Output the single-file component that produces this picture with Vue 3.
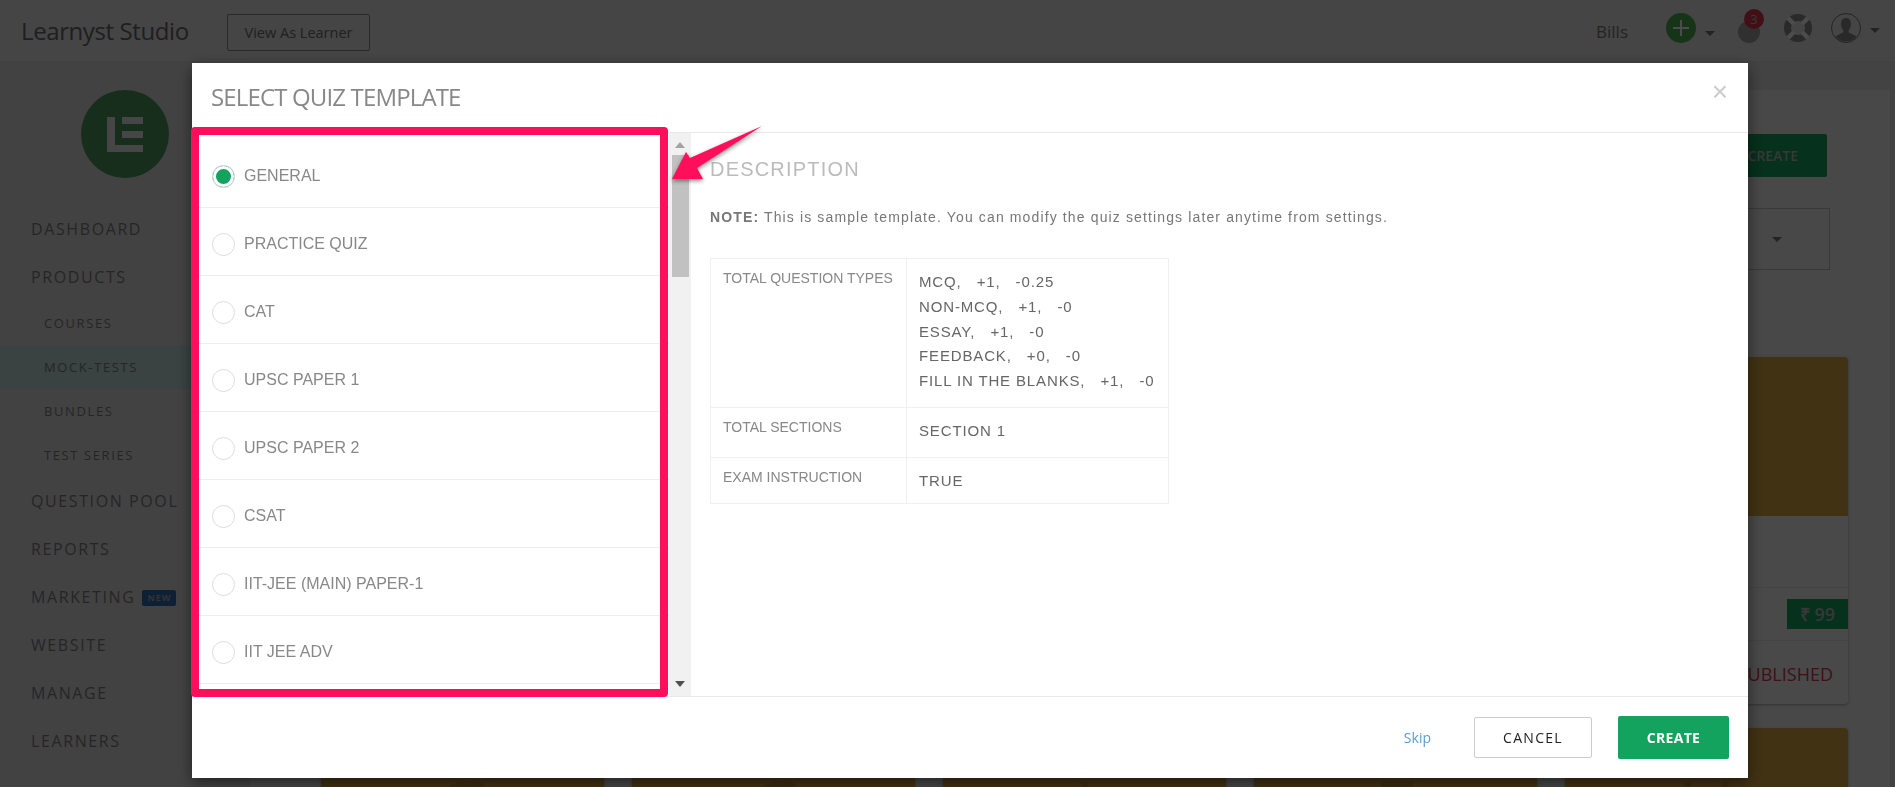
<template>
  <div class="page">
    <header class="topbar">
      <span class="brand">Learnyst Studio</span>
      <button class="view-btn">View As Learner</button>
      <div class="top-right">
        <span class="bills">Bills</span>
        <svg class="ico-plus" width="30" height="30" viewBox="0 0 30 30">
          <circle cx="15" cy="15" r="15" fill="#4caf50" />
          <path d="M15 7v16M7 15h16" stroke="#fff" stroke-width="2" />
        </svg>
        <span class="caret caret-plus"></span>
        <span class="bell"><span class="bell-badge">3</span></span>
        <svg class="ico-ring" width="28" height="28" viewBox="0 0 28 28">
          <circle cx="14" cy="14" r="10.5" fill="none" stroke="#8c8c8c" stroke-width="7" />
          <path d="M4 4l6 6M24 4l-6 6M4 24l6-6M24 24l-6-6" stroke="#fff" stroke-width="4.500" />
        </svg>
        <svg class="ico-user" width="30" height="30" viewBox="0 0 30 30">
          <circle cx="15" cy="15" r="14.500" fill="#e8e8e8" stroke="#777" />
          <path d="M15 5c3.400 0 5 2.600 5 6 0 2.800-1 5-2.300 6.200v2.200l6.300 3.200c.8.400 1 1.100 1 2A14.300 14.300 0 0 1 5 24.400c0-.9.200-1.600 1-2l6.300-3.200v-2.200C11 16 10 13.800 10 11c0-3.400 1.600-6 5-6z" fill="#8a8a8a" />
        </svg>
        <span class="caret caret-user"></span>
      </div>
    </header>

    <div class="layout">
      <aside class="sidebar">
        <div class="logo">
          <svg width="88" height="88" viewBox="0 0 88 88">
            <circle cx="44" cy="44" r="44" fill="#4c9a5c" />
            <path d="M26 27h8v28h28v7H26zM41 27h21v7H41zM41 41h21v7H41z" fill="#ececec" />
          </svg>
        </div>
        <nav class="nav">
          <template v-for="item in navItems" :key="item.label">
            <div v-if="item.sub" class="nav-sub" :class="{ active: item.active }">{{ item.label }}</div>
            <div v-else class="nav-main">
              {{ item.label }}<span v-if="item.badge" class="nav-badge">{{ item.badge }}</span>
            </div>
          </template>
        </nav>
      </aside>

      <main class="content">
        <div class="toolbar">
          <button class="create-btn">CREATE</button>
          <div class="filter"><span class="caret"></span></div>
        </div>
        <div class="cards">
          <div v-for="card in cards" :key="card.id" class="card">
            <div class="card-img">{{ card.letter }}</div>
            <div class="card-mid"></div>
            <div class="card-price-row"><span v-if="card.full" class="price">₹ 99</span></div>
            <div class="card-status"><template v-if="card.full">PUBLISHED</template></div>
          </div>
        </div>
      </main>
      <div class="page-scroll"></div>
    </div>

    <div class="backdrop"></div>

    <section class="modal">
      <div class="modal-head">
        <h2 class="modal-title">SELECT QUIZ TEMPLATE</h2>
        <span class="modal-close">×</span>
      </div>
      <div class="modal-body">
        <div class="tpl-list">
          <label v-for="(tpl, i) in templates" :key="tpl" class="tpl-row">
            <span class="radio" :class="{ on: i === 0 }"></span>
            <span class="tpl-name">{{ tpl }}</span>
          </label>
        </div>
        <div class="scrollbar">
          <span class="arrow up"></span>
          <span class="thumb"></span>
          <span class="arrow down"></span>
        </div>
        <div class="detail">
          <h3 class="detail-title">DESCRIPTION</h3>
          <p class="note"><b>NOTE:</b> This is sample template. You can modify the quiz settings later anytime from settings.</p>
          <table class="info">
            <tbody>
              <tr class="r1">
                <th>TOTAL QUESTION TYPES</th>
                <td><div v-for="q in questionTypes" :key="q" class="qline">{{ q }}</div></td>
              </tr>
              <tr class="r2">
                <th>TOTAL SECTIONS</th>
                <td><div class="qline">SECTION 1</div></td>
              </tr>
              <tr class="r3">
                <th>EXAM INSTRUCTION</th>
                <td><div class="qline">TRUE</div></td>
              </tr>
            </tbody>
          </table>
        </div>
      </div>
      <div class="modal-foot">
        <a class="skip">Skip</a>
        <button class="btn-cancel">CANCEL</button>
        <button class="btn-create">CREATE</button>
      </div>
    </section>

    <!-- annotation drawn over the screenshot -->
    <div class="mark-frame"></div>
    <svg class="mark-arrow" width="110" height="70" viewBox="0 0 110 70">
      <polygon points="12,60 26,33 30,39 102,7 37,49 43,60" fill="#ff0f5b" />
    </svg>
  </div>
</template>

<script setup>
const navItems = [
  { label: 'DASHBOARD' },
  { label: 'PRODUCTS' },
  { label: 'COURSES', sub: true },
  { label: 'MOCK-TESTS', sub: true, active: true },
  { label: 'BUNDLES', sub: true },
  { label: 'TEST SERIES', sub: true },
  { label: 'QUESTION POOL' },
  { label: 'REPORTS' },
  { label: 'MARKETING', badge: 'NEW' },
  { label: 'WEBSITE' },
  { label: 'MANAGE' },
  { label: 'LEARNERS' },
];

const templates = [
  'GENERAL',
  'PRACTICE QUIZ',
  'CAT',
  'UPSC PAPER 1',
  'UPSC PAPER 2',
  'CSAT',
  'IIT-JEE (MAIN) PAPER-1',
  'IIT JEE ADV',
];

const questionTypes = [
  'MCQ,   +1,   -0.25',
  'NON-MCQ,   +1,   -0',
  'ESSAY,   +1,   -0',
  'FEEDBACK,   +0,   -0',
  'FILL IN THE BLANKS,   +1,   -0',
];

// first row sits behind the modal, only its last card shows; second row is cut by the window
const letters = ['G', 'C', 'I', 'E', 'U'];
const cards = [
  ...letters.map((_, id) => ({ id, letter: '', full: id === 4 })),
  ...letters.map((letter, id) => ({ id: id + 5, letter, full: false })),
];
</script>

<style>
html,
body {
  margin: 0;
  height: 100%;
  overflow: hidden;
}
</style>

<style scoped>
.page {
  height: 787px;
  overflow: hidden;
  background: #e0e0e0;
  font-family: "Open Sans", "Liberation Sans", sans-serif;
}

.topbar {
  height: 61px;
  display: flex;
  align-items: center;
  padding-left: 21px;
  background: #e6e6e6;
  border-bottom: 1px solid #dcdcdc;
}

.brand {
  width: 206px;
  font-size: 24px;
  letter-spacing: -0.4px;
  color: #6a6a6a;
}

.view-btn {
  width: 143px;
  height: 37px;
  margin-top: 3px;
  padding: 0;
  background: transparent;
  border: 1px solid #8a8a8a;
  border-radius: 2px;
  font: 14.500px "Open Sans", sans-serif;
  color: #6e6e6e;
}

.top-right {
  margin-left: auto;
  display: flex;
  align-items: center;
  padding-right: 15px;
  height: 100%;
}

.bills {
  font-size: 17px;
  color: #7a7a7a;
  margin-top: 1px;
  margin-right: 38px;
}

.ico-plus {
  margin-top: -6px;
  margin-right: 9px;
}

.caret {
  display: inline-block;
  width: 0;
  height: 0;
  border-left: 5px solid transparent;
  border-right: 5px solid transparent;
  border-top: 5px solid #777;
}

.caret-plus {
  margin-top: 5px;
  margin-right: 23px;
}

.bell {
  position: relative;
  width: 22px;
  height: 22px;
  border-radius: 50%;
  background: #a0a0a0;
  margin-top: 3px;
  margin-right: 24px;
}

.bell-badge {
  position: absolute;
  top: -12px;
  left: 6px;
  width: 20px;
  height: 20px;
  border-radius: 50%;
  background: #d9364f;
  color: #b9b9b9;
  font-size: 13px;
  line-height: 20px;
  text-align: center;
}

.ico-ring {
  margin-top: -6px;
  margin-right: 19px;
}

.ico-user {
  margin-top: -6px;
  margin-right: 9px;
}

.layout {
  display: flex;
  height: 726px;
}

.sidebar {
  width: 250px;
  flex-shrink: 0;
  background: #dedede;
}

.logo {
  padding: 28px 0 0 81px;
  line-height: 0;
}

.nav {
  margin-top: 27px;
  color: #7e7e7e;
}

.nav-main {
  height: 48px;
  line-height: 48px;
  padding-left: 31px;
  font-size: 16px;
  letter-spacing: 1.6px;
}

.nav-sub {
  height: 44px;
  line-height: 44px;
  padding-left: 44px;
  font-size: 13px;
  letter-spacing: 1.6px;
}

.nav-sub.active {
  background: #c4dcdc;
}

.nav-badge {
  display: inline-block;
  margin-left: 7px;
  width: 34px;
  height: 16px;
  line-height: 16px;
  border-radius: 2px;
  background: #2c6bb4;
  color: #aaa;
  font-size: 9px;
  font-weight: 700;
  letter-spacing: 1px;
  text-align: center;
  vertical-align: 2px;
}

.content {
  flex: 1;
  margin-top: 28px;
  background: #f0f0f0;
  padding: 44px 42px 0 70px;
  box-sizing: border-box;
  min-width: 0;
}

.toolbar {
  display: flex;
  flex-direction: column;
  align-items: flex-end;
}

.create-btn {
  width: 150px;
  height: 43px;
  margin-right: 21px;
  background: #14a35e;
  border: 0;
  border-radius: 2px;
  color: #bbb;
  font: 600 14px "Open Sans", sans-serif;
  text-align: right;
  padding-right: 29px;
}

.filter {
  width: 160px;
  height: 62px;
  margin-top: 31px;
  margin-right: 18px;
  border: 1px solid #c0c0c0;
  box-sizing: border-box;
  display: flex;
  align-items: center;
  justify-content: flex-end;
  padding-right: 47px;
}

.cards {
  margin-top: 87px;
  display: grid;
  grid-template-columns: repeat(5, 283px);
  gap: 24px 28px;
  justify-content: end;
}

.card {
  height: 347px;
  background: #f4f4f4;
  border-radius: 4px;
  box-shadow: 0 1px 3px rgba(0, 0, 0, 0.3);
  display: flex;
  flex-direction: column;
  overflow: hidden;
}

.card-img {
  height: 159px;
  flex-shrink: 0;
  background: #d9a743;
  color: #c2953b;
  font-size: 80px;
  line-height: 159px;
  text-align: center;
}

.card-mid {
  height: 76px;
  box-sizing: border-box;
  border-bottom: 1px solid #e2e2e2;
}

.card-price-row {
  height: 55px;
  display: flex;
  justify-content: flex-end;
  padding-top: 11px;
  box-sizing: border-box;
  border-bottom: 1px solid #e2e2e2;
}

.price {
  width: 61px;
  height: 30px;
  line-height: 30px;
  background: #14a35e;
  color: #bbb;
  font-size: 18px;
  font-weight: 600;
  text-align: center;
}

.card-status {
  flex: 1;
  text-align: right;
  padding: 3px 15px 0 0;
  line-height: 60px;
  font-size: 18px;
  color: #d9364f;
}

.page-scroll {
  width: 5px;
  flex-shrink: 0;
  background: #dcdcdc;
}

.backdrop {
  position: fixed;
  inset: 0;
  background: rgba(0, 0, 0, 0.7);
}

.modal {
  position: fixed;
  left: 192px;
  top: 63px;
  width: 1556px;
  height: 715px;
  background: #fff;
  box-shadow: 0 5px 15px rgba(0, 0, 0, 0.5);
  display: flex;
  flex-direction: column;
}

.modal-head {
  height: 69px;
  flex-shrink: 0;
  border-bottom: 1px solid #e9e9e9;
  display: flex;
  align-items: center;
  justify-content: space-between;
  padding: 0 20px 0 19px;
}

.modal-title {
  margin: -2px 0 0;
  font-size: 24px;
  font-weight: 400;
  letter-spacing: -0.85px;
  color: #888;
}

.modal-close {
  font: 28px "Liberation Sans", sans-serif;
  color: #ccc;
  margin-top: -12px;
}

.modal-body {
  flex: 1;
  min-height: 0;
  display: flex;
}

.tpl-list {
  width: 477px;
  flex-shrink: 0;
  padding-top: 7px;
  box-sizing: border-box;
  overflow: hidden;
}

.tpl-row {
  height: 68px;
  box-sizing: border-box;
  border-bottom: 1px solid #eee;
  display: flex;
  align-items: center;
  padding-left: 20px;
  padding-top: 5px;
}

.radio {
  width: 23px;
  height: 23px;
  box-sizing: border-box;
  border: 1px solid #ddd;
  border-radius: 50%;
  margin-right: 9px;
  background: #fff;
}

.radio.on {
  background: #14a35e;
  box-shadow: inset 0 0 0 3px #fff;
}

.tpl-name {
  font: 16px "Liberation Sans", sans-serif;
  color: #888;
}

.scrollbar {
  width: 22px;
  flex-shrink: 0;
  background: #f1f1f1;
  display: flex;
  flex-direction: column;
  align-items: center;
  padding: 9px 0;
  box-sizing: border-box;
}

.arrow {
  width: 0;
  height: 0;
  border-left: 5px solid transparent;
  border-right: 5px solid transparent;
}

.arrow.up {
  border-bottom: 6px solid #a3a3a3;
}

.arrow.down {
  margin-top: auto;
  border-top: 6px solid #505050;
}

.thumb {
  width: 17px;
  height: 122px;
  margin-top: 7px;
  background: #c1c1c1;
}

.detail {
  flex: 1;
  padding: 25px 0 0 19px;
  font-family: "Liberation Sans", sans-serif;
}

.detail-title {
  margin: 0;
  font-size: 20px;
  font-weight: 400;
  line-height: 23px;
  letter-spacing: 1.2px;
  color: #bbb;
}

.note {
  margin: 28px 0 0;
  font-size: 14px;
  line-height: 16px;
  letter-spacing: 1.13px;
  color: #777;
}

.info {
  margin-top: 33px;
  width: 459px;
  border-collapse: collapse;
  table-layout: fixed;
}

.info th,
.info td {
  border: 1px solid #f0f0f0;
  vertical-align: top;
}

.info th {
  width: 196px;
  box-sizing: border-box;
  padding: 10px 0 0 12px;
  font-size: 14px;
  line-height: 18px;
  font-weight: 400;
  text-align: left;
  color: #888;
}

.info td {
  padding: 11px 0 0 12px;
}

.r1 {
  height: 149px;
}

.r2 {
  height: 50px;
}

.r3 {
  height: 46px;
}

.qline {
  font-size: 15px;
  line-height: 24.800px;
  letter-spacing: 0.86px;
  color: #666;
  white-space: pre;
}

.modal-foot {
  height: 82px;
  flex-shrink: 0;
  border-top: 1px solid #e9e9e9;
  display: flex;
  align-items: center;
  justify-content: flex-end;
  padding-right: 19px;
  box-sizing: border-box;
}

.skip {
  font-size: 14px;
  color: #5b9bd5;
  margin-right: 43px;
}

.btn-cancel {
  width: 118px;
  height: 41px;
  margin-right: 26px;
  background: #fff;
  border: 1px solid #ccc;
  border-radius: 2px;
  font: 500 14px "Open Sans", sans-serif;
  letter-spacing: 1.3px;
  color: #222;
}

.btn-create {
  width: 111px;
  height: 43px;
  background: #14a35e;
  border: 0;
  border-radius: 2px;
  font: 700 14px "Open Sans", sans-serif;
  letter-spacing: 0.3px;
  color: #fff;
}

.mark-frame {
  position: fixed;
  left: 191px;
  top: 127px;
  width: 477px;
  height: 570px;
  box-sizing: border-box;
  border: 8px solid #ff0f5b;
  border-radius: 4px;
}

.mark-arrow {
  position: fixed;
  left: 660px;
  top: 119px;
  filter: drop-shadow(0 2px 2px rgba(0, 0, 0, 0.45));
}
</style>
